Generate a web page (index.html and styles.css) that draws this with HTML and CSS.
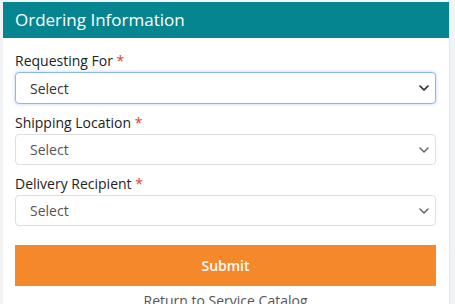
FILE: index.html
```html
<!DOCTYPE html>
<html lang="en">
<head>
    <meta charset="UTF-8">
    <meta name="viewport" content="width=device-width, initial-scale=1.0">
    <title>Ordering Information</title>
    <link rel="stylesheet" href="styles.css">
</head>
<body>
    <div class="card">
        <div class="card-header">Ordering Information</div>

        <form class="card-body">
            <label for="requesting_for">Requesting For <span class="req">*</span></label>
            <div class="select-wrap">
                <select id="requesting_for" class="focused"><option>Select</option></select>
                <svg class="chevron dark" width="10" height="6" viewBox="0 0 10 6"><path d="M1 1l4 4 4-4" fill="none" stroke="currentColor" stroke-width="1.6" stroke-linecap="round" stroke-linejoin="round"/></svg>
            </div>

            <label for="shipping_location">Shipping Location <span class="req">*</span></label>
            <div class="select-wrap">
                <select id="shipping_location"><option>Select</option></select>
                <svg class="chevron" width="10" height="6" viewBox="0 0 10 6"><path d="M1 1l4 4 4-4" fill="none" stroke="currentColor" stroke-width="1.5" stroke-linecap="round" stroke-linejoin="round"/></svg>
            </div>

            <label for="delivery_recipient">Delivery Recipient <span class="req">*</span></label>
            <div class="select-wrap">
                <select id="delivery_recipient"><option>Select</option></select>
                <svg class="chevron" width="10" height="6" viewBox="0 0 10 6"><path d="M1 1l4 4 4-4" fill="none" stroke="currentColor" stroke-width="1.5" stroke-linecap="round" stroke-linejoin="round"/></svg>
            </div>

            <button type="button" class="submit">Submit</button>
            <a class="return" href="#">Return to Service Catalog</a>
        </form>
    </div>
</body>
</html>
```

FILE: styles.css
```css
/* page */
body {
    margin: 0;
    background: #f1f3f5;
    font-family: "Open Sans", "Noto Sans", sans-serif;
    color: #222;
}

/* card */
.card {
    margin: 2px 5px 0 3px;
    background: #fff;
    border-right: 1px solid #e4e6e9;
    min-height: 320px;
}

.card-header {
    height: 36px;
    line-height: 36px;
    padding-left: 12px;
    background: #04858f;
    color: #fff;
    font-size: 17px;
}

.card-body {
    display: flex;
    flex-direction: column;
    padding: 13px 13px 0 12px;
}

label {
    font-size: 14px;
    line-height: 20px;
    margin-bottom: 1px;
}

.req {
    color: #e53935;
}

/* select boxes */
.select-wrap {
    position: relative;
    margin-bottom: 9px;
}

select {
    display: block;
    width: 100%;
    height: 31px;
    padding: 0 14px;
    font-family: inherit;
    font-size: 14px;
    color: #555;
    background: #fff;
    border: 1px solid #dcdfe3;
    border-radius: 4px;
    appearance: none;
    outline: none;
}

select.focused {
    height: 32px;
    color: #333;
    border-color: #8cb8ee;
    box-shadow: 0 0 3px 1px rgba(90, 150, 230, 0.25);
}

.chevron {
    position: absolute;
    right: 7px;
    top: 13px;
    color: #666;
}

.chevron.dark {
    color: #222;
}

/* buttons */
.submit {
    margin-top: 10px;
    height: 41px;
    background: #f5882a;
    color: #fff;
    border: none;
    font-family: inherit;
    font-size: 14px;
    font-weight: 600;
}

.return {
    margin-top: 5px;
    text-align: center;
    font-size: 14px;
    line-height: 20px;
    color: #555;
    text-decoration: none;
}
```
